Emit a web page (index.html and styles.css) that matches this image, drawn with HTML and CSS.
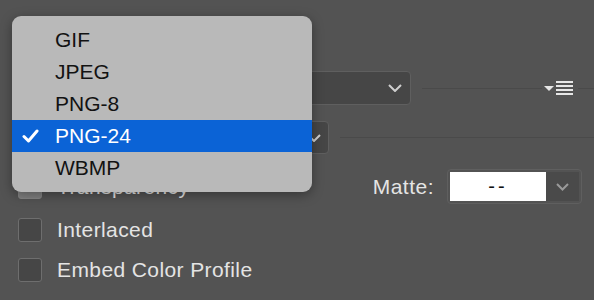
FILE: index.html
```html
<!DOCTYPE html>
<html lang="en">
<head>
    <meta charset="UTF-8">
    <title>Save for Web - Format</title>
    <link rel="stylesheet" href="styles.css">
</head>
<body>
    <div class="panel">
        <div class="row preset-row">
            <div class="select preset-select">
                <svg class="chevron" width="14" height="8" viewBox="0 0 14 8"><polyline points="1,1 7,7 13,1" /></svg>
            </div>
            <div class="rule"></div>
            <svg class="panel-menu" width="30" height="16" viewBox="0 0 30 16">
                <polygon points="0,5 10,5 5,10" fill="#e6e6e6" />
                <rect x="12" y="0" width="17" height="2" fill="#e6e6e6" />
                <rect x="12" y="4" width="17" height="2" fill="#e6e6e6" />
                <rect x="12" y="8" width="17" height="2" fill="#e6e6e6" />
                <rect x="12" y="12" width="17" height="2" fill="#e6e6e6" />
            </svg>
            <div class="rule short"></div>
        </div>

        <div class="row format-row">
            <div class="select format-select">
                <svg class="chevron" width="14" height="8" viewBox="0 0 14 8"><polyline points="1,1 7,7 13,1" /></svg>
            </div>
            <div class="rule"></div>
        </div>

        <div class="row option-row">
            <label class="option">
                <span class="checkbox checked"></span>
                <span class="option-label">Transparency</span>
            </label>
            <div class="matte">
                <span class="matte-label">Matte:</span>
                <div class="matte-field">
                    <span class="matte-value">--</span>
                    <span class="matte-arrow">
                        <svg width="13" height="8" viewBox="0 0 13 8"><polyline points="1,1 6.5,6.5 12,1" /></svg>
                    </span>
                </div>
            </div>
        </div>

        <label class="option check-row interlaced-row">
            <span class="checkbox"></span>
            <span class="option-label">Interlaced</span>
        </label>

        <label class="option check-row embed-row">
            <span class="checkbox"></span>
            <span class="option-label">Embed Color Profile</span>
        </label>

        <ul class="menu">
            <li class="menu-item">GIF</li>
            <li class="menu-item">JPEG</li>
            <li class="menu-item">PNG-8</li>
            <li class="menu-item selected">
                <svg class="tick" width="17" height="14" viewBox="0 0 17 14"><polyline points="2,7.5 6.5,12 15,2" /></svg>
                PNG-24
            </li>
            <li class="menu-item">WBMP</li>
        </ul>
    </div>
</body>
</html>
```

FILE: styles.css
```css
html, body {
    margin: 0;
    padding: 0;
}
body {
    width: 594px;
    height: 300px;
    overflow: hidden;
    background-color: #535353;
    font-family: "Liberation Sans", Arial, sans-serif;
}
.panel {
    position: relative;
    height: 300px;
    display: flex;
    flex-direction: column;
    padding-left: 18px;
    box-sizing: border-box;
}
.row {
    display: flex;
    align-items: center;
}
.preset-row {
    margin-top: 71px;
    height: 34px;
}
.format-row {
    margin-top: 16px;
    height: 33px;
}
.option-row {
    margin-top: 15px;
    height: 35px;
    justify-content: space-between;
    padding-right: 12px;
}
.select {
    height: 100%;
    box-sizing: border-box;
    background-color: #464646;
    border: 1px solid #5f5f5f;
    border-radius: 4px;
    display: flex;
    align-items: center;
    justify-content: flex-end;
}
.preset-select {
    width: 393px;
    padding-right: 8px;
}
.format-select {
    width: 311px;
    padding-right: 7px;
}
.chevron polyline,
.matte-arrow polyline {
    fill: none;
    stroke: #cfcfcf;
    stroke-width: 2;
}
.rule {
    flex: 1;
    height: 1px;
    background-color: #4a4a4a;
    margin-left: 11px;
}
.rule.short {
    flex: 0 0 16px;
    margin-left: 4px;
}
.panel-menu {
    flex: none;
    margin-left: 2px;
    margin-top: 1px;
}
.option {
    display: flex;
    align-items: center;
    color: #e4e4e4;
    font-size: 21px;
    letter-spacing: 0.4px;
}
.check-row {
    height: 24px;
}
.interlaced-row {
    margin-top: 14px;
}
.embed-row {
    margin-top: 16px;
}
.checkbox {
    width: 24px;
    height: 24px;
    box-sizing: border-box;
    border: 1px solid #6e6e6e;
    border-radius: 3px;
    background-color: #464646;
    margin-right: 15px;
}
.checkbox.checked {
    background-color: #808080;
    border-color: #858585;
}
.matte {
    display: flex;
    align-items: center;
}
.matte-label {
    color: #e4e4e4;
    font-size: 21px;
    letter-spacing: 0.5px;
    margin-right: 13px;
}
.matte-field {
    width: 135px;
    height: 35px;
    box-sizing: border-box;
    border: 1px solid #5f5f5f;
    border-radius: 4px;
    padding: 2px;
    display: flex;
}
.matte-value {
    width: 96px;
    background-color: #ffffff;
    color: #111111;
    font-size: 20px;
    letter-spacing: 3px;
    display: flex;
    align-items: center;
    justify-content: center;
}
.matte-arrow {
    flex: 1;
    background-color: #4a4a4a;
    display: flex;
    align-items: center;
    justify-content: center;
}
.matte-arrow polyline {
    stroke: #9a9a9a;
}
.menu {
    position: absolute;
    left: 12px;
    top: 16px;
    width: 300px;
    margin: 0;
    padding: 8px 0;
    list-style: none;
    background-color: #b9b9b9;
    border-radius: 9px;
    box-shadow: 0 3px 12px rgba(0, 0, 0, 0.35);
}
.menu-item {
    position: relative;
    height: 32px;
    line-height: 32px;
    padding-left: 43px;
    font-size: 21px;
    color: #121212;
}
.menu-item.selected {
    background-color: #0b63d6;
    color: #ffffff;
}
.tick {
    position: absolute;
    left: 10px;
    top: 9px;
}
.tick polyline {
    fill: none;
    stroke: #ffffff;
    stroke-width: 3;
    stroke-linecap: round;
    stroke-linejoin: round;
}
```
